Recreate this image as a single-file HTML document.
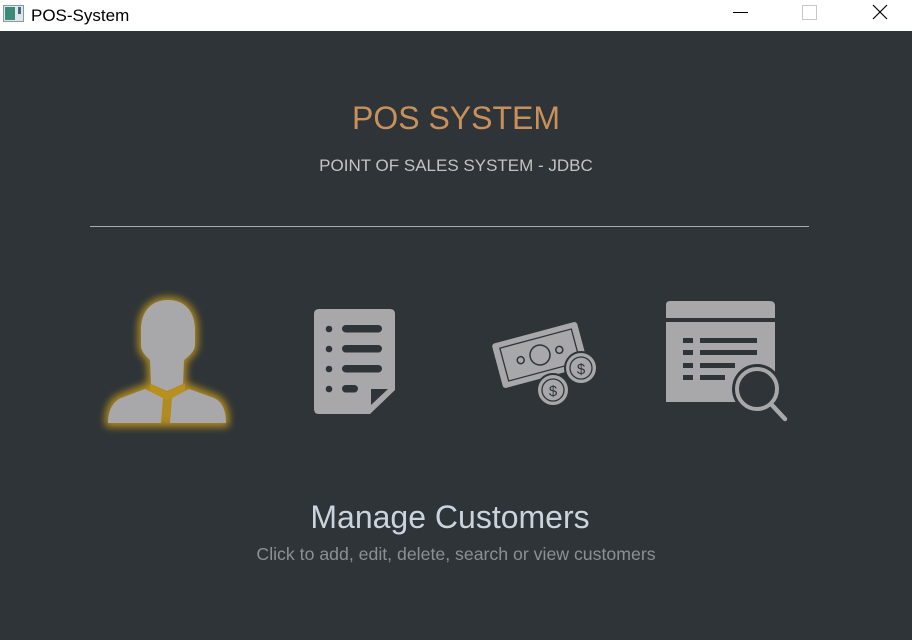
<!DOCTYPE html>
<html><head><meta charset="utf-8"><style>
html,body{margin:0;padding:0;width:912px;height:640px;overflow:hidden;background:#2e3438;font-family:"Liberation Sans","DejaVu Sans",sans-serif}
.tb{position:absolute;left:0;top:0;width:912px;height:31px;background:#fff}
.t{position:absolute;left:0;width:912px;text-align:center;white-space:nowrap}
</style></head><body>
<div class="tb">
<svg width="912" height="31" style="position:absolute;left:0;top:0">
<rect x="3.5" y="5.5" width="20" height="16" fill="#dfe6ea" stroke="#8a9aa2"/>
<rect x="5" y="7" width="10" height="13" fill="#3c8a78"/>
<rect x="18" y="7" width="3" height="7" fill="#3a6e80"/>
<text x="31" y="21" font-size="17" fill="#000" font-family="Liberation Sans,sans-serif">POS-System</text>
<line x1="733" y1="12.5" x2="748" y2="12.5" stroke="#000"/>
<rect x="802.5" y="5.5" width="14" height="14" fill="none" stroke="#c8c8c8"/>
<path d="M873 5 L887 19 M887 5 L873 19" stroke="#000" stroke-width="1.2"/>
</svg>
</div>
<div class="t" style="top:100px;font-size:32px;color:#c8905a">POS SYSTEM</div>
<div class="t" style="top:156px;font-size:17px;color:#c2c4c4">POINT OF SALES SYSTEM - JDBC</div>
<div style="position:absolute;left:90px;top:226px;width:719px;height:1px;background:#a9abac"></div>
<svg width="912" height="640" style="position:absolute;left:0;top:0">
<defs><filter id="g" x="-50%" y="-50%" width="200%" height="200%"><feGaussianBlur stdDeviation="4"/></filter></defs>
<g filter="url(#g)" opacity="0.85">
<path d="M168 300 C150 300 140 313 141 333 L141 345 C141 352 146 356 150 360 L151 385 L120 397 C110 402 108 412 108 424 L226 424 C227 412 224 401 214 397 L183 385 L184 360 C189 356 195 351 195 345 L195 333 C196 313 186 300 168 300Z" fill="#c89a1a" stroke="#c89a1a" stroke-width="6" stroke-linejoin="round"/>
</g>
<path d="M150 384 L167 392 L185 384 L185 394 L167 400 L150 394Z" fill="#b8901e"/>
<g fill="#a8a8aa">
<path d="M168 300 C150 300 140 313 141 333 L141 345 C141 352 146 356 150 360 L151 384 L167 391 L183 384 L184 360 C189 356 195 351 195 345 L195 333 C196 313 186 300 168 300Z"/>
<path d="M145 389 L121 398 C112 402 108 412 108 423 L161 423 L163 398Z"/>
<path d="M189 389 L214 398 C223 402 226 412 226 423 L170 423 L172 398Z"/>
<path d="M319 309 L390 309 Q395 309 395 314 L395 390 L370 414 L319 414 Q314 414 314 409 L314 314 Q314 309 319 309Z"/>
<path d="M371 405 L388 389 L371 389Z" fill="#2e3438"/>
<g transform="rotate(-15 540 355)">
<rect x="496" y="332" width="88" height="46" rx="3"/>
<rect x="503" y="338" width="74" height="34" fill="none" stroke="#2e3438" stroke-width="1.3"/>
<circle cx="540" cy="355" r="10" fill="none" stroke="#2e3438" stroke-width="1.5"/>
<circle cx="520" cy="355" r="3.5" fill="none" stroke="#2e3438" stroke-width="1.5"/>
<circle cx="560" cy="355" r="3.5" fill="none" stroke="#2e3438" stroke-width="1.5"/>
</g>
<circle cx="581" cy="368" r="16" stroke="#2e3438" stroke-width="2"/>
<circle cx="581" cy="368" r="11" fill="none" stroke="#2e3438" stroke-width="1.3"/>
<text x="581" y="374" font-size="15" text-anchor="middle" fill="#2e3438">$</text>
<circle cx="553" cy="390" r="16" stroke="#2e3438" stroke-width="2"/>
<circle cx="553" cy="390" r="11" fill="none" stroke="#2e3438" stroke-width="1.3"/>
<text x="553" y="396" font-size="15" text-anchor="middle" fill="#2e3438">$</text>
<path d="M670 301 L770 301 Q775 301 775 306 L775 318 L666 318 L666 305 Q666 301 670 301Z"/>
<rect x="666" y="322" width="109" height="80"/>
</g>
<g fill="#2e3438">
<circle cx="329" cy="329" r="3.3"/><circle cx="329" cy="349" r="3.3"/><circle cx="329" cy="369" r="3.3"/><circle cx="329" cy="389" r="3.3"/>
<rect x="342" y="325" width="40" height="7.5" rx="3.7"/>
<rect x="342" y="345" width="40" height="7.5" rx="3.7"/>
<rect x="342" y="365" width="40" height="7.5" rx="3.7"/>
<rect x="342" y="385" width="16" height="7.5" rx="3.7"/>
<rect x="683" y="338" width="10" height="5"/><rect x="700" y="338" width="57" height="5"/>
<rect x="683" y="350" width="10" height="5"/><rect x="700" y="350" width="57" height="5"/>
<rect x="683" y="363" width="10" height="5"/><rect x="700" y="363" width="35" height="5"/>
<rect x="683" y="375" width="10" height="5"/><rect x="700" y="375" width="25" height="5"/>
<circle cx="757" cy="389" r="25"/>
</g>
<circle cx="757" cy="389" r="20" fill="#2e3438" stroke="#a8a8aa" stroke-width="4"/>
<line x1="771" y1="404" x2="785" y2="419" stroke="#a8a8aa" stroke-width="4.5" stroke-linecap="round"/>
</svg>
<div class="t" style="top:499px;left:-6px;font-size:32px;color:#cbd3dc">Manage Customers</div>
<div class="t" style="top:544px;font-size:17.7px;color:#8b9095">Click to add, edit, delete, search or view customers</div>
</body></html>
